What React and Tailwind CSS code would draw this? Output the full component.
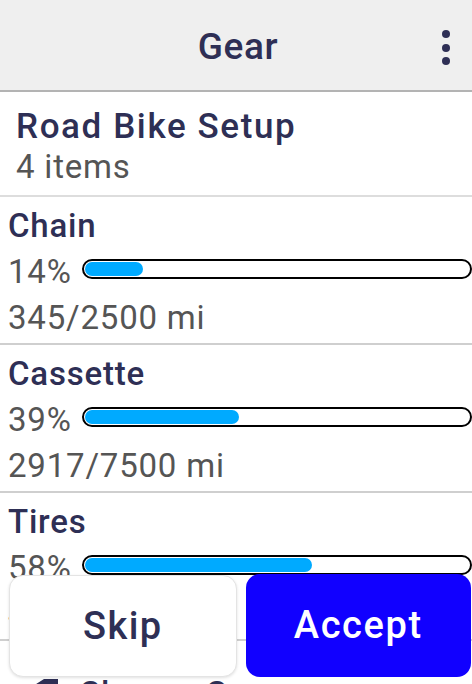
import React from 'react';

const items = [
  { name: 'Chain', pct: 14, used: 345, limit: 2500 },
  { name: 'Cassette', pct: 39, used: 2917, limit: 7500 },
  { name: 'Tires', pct: 58, used: 4350, limit: 7500 },
];

const ProgressBar = ({ pct }) => (
  <div className="flex-1 h-[20px] mb-[7px] border-2 border-black rounded-full p-[1px] bg-white">
    <div
      className="h-full rounded-full bg-[#00aaff]"
      style={{ width: `calc(${pct}% + 4px)` }}
    />
  </div>
);

const GearItem = ({ item }) => (
  <div className="pl-2 pt-[6px] pb-[2px] border-b-2 border-[#cfcfcf] tracking-[0.8px]">
    <div className="text-[33px] leading-[46px] font-medium text-[#2e2f55]">{item.name}</div>
    <div className="flex items-center text-[33px] leading-[46px] text-[#555555]">
      <span className="w-[74px] shrink-0">{item.pct}%</span>
      <ProgressBar pct={item.pct} />
    </div>
    <div className="text-[33px] leading-[46px] text-[#555555]">
      {item.used}/{item.limit} mi
    </div>
  </div>
);

export default function App() {
  return (
    <div className="relative w-[472px] h-[684px] overflow-hidden bg-white font-['Roboto',sans-serif]">
      <header className="relative h-[92px] bg-[#efefef] border-b-2 border-[#b3b3b3] flex items-center justify-center">
        <h1 className="text-[37px] font-medium tracking-[0.6px] text-[#2e2f55] mt-[3px] ml-[4px]">Gear</h1>
        <div className="absolute right-[22px] top-[30px] flex flex-col gap-[5.5px]">
          <span className="w-[8px] h-[8px] rounded-full bg-[#2e2f55]" />
          <span className="w-[8px] h-[8px] rounded-full bg-[#2e2f55]" />
          <span className="w-[8px] h-[8px] rounded-full bg-[#2e2f55]" />
        </div>
      </header>

      <div className="h-[105px] px-4 pt-[15px] border-b-2 border-[#dddddd]">
        <div className="text-[35px] leading-[40px] font-medium tracking-[1.6px] text-[#2e2f55]">Road Bike Setup</div>
        <div className="text-[33px] leading-[40px] tracking-[0.8px] text-[#555555]">4 items</div>
      </div>

      {items.map((item) => (
        <GearItem key={item.name} item={item} />
      ))}

      <div className="flex items-start pl-[33px] pt-[30px] gap-[20px]">
        <svg width="26" height="30" viewBox="0 0 26 30" className="mt-[8px]">
          <path d="M11 0 H25 V8 H14 V14 L0 7 Z" fill="#2e2f55" />
        </svg>
        <span className="text-[33px] leading-[46px] font-medium tracking-[0.8px] text-[#2e2f55]">Change Gear</span>
      </div>

      <div className="absolute left-[9px] right-[1px] top-[574px] h-[103px] flex gap-[9px]">
        <button className="flex-1 mt-[1px] bg-white border border-[#e4e4e4] rounded-[14px] shadow-[0_1px_3px_rgba(0,0,0,0.12)] text-[38px] font-medium tracking-[1.4px] text-[#2e2f55]">
          Skip
        </button>
        <button className="flex-1 bg-[#1100ff] rounded-[14px] text-[38px] font-medium tracking-[1.6px] text-white">
          Accept
        </button>
      </div>
    </div>
  );
}
